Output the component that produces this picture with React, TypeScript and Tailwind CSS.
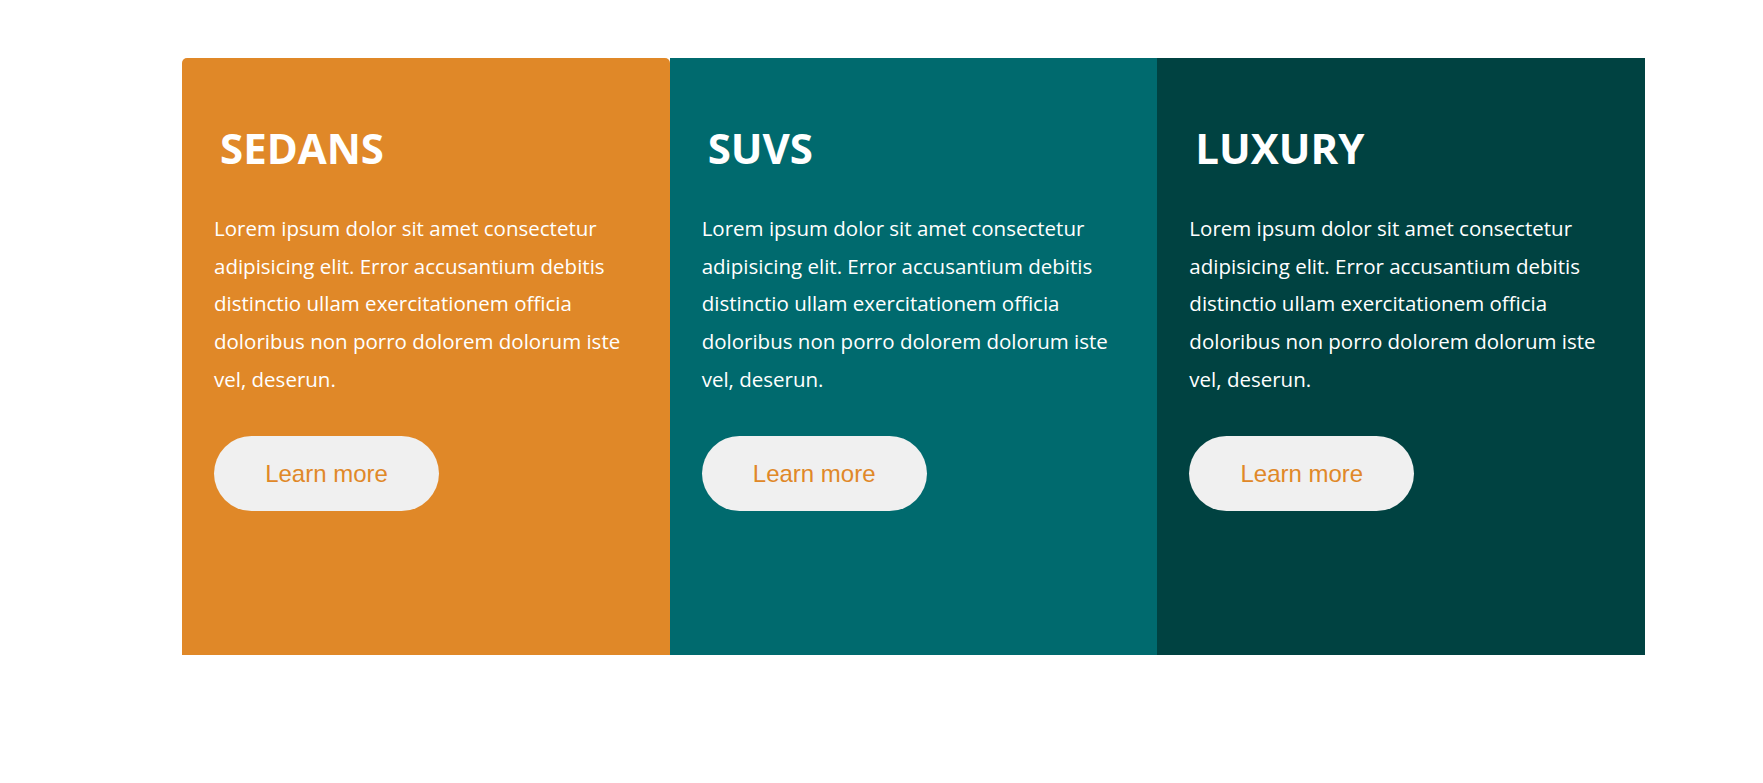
const categories = [
  { title: 'SEDANS', bg: 'bg-[#e08828]', corner: 'rounded-t-[5px]' },
  { title: 'SUVS', bg: 'bg-[#006a6e]', corner: '' },
  { title: 'LUXURY', bg: 'bg-[#004241]', corner: '' },
];

const blurb =
  'Lorem ipsum dolor sit amet consectetur adipisicing elit. Error accusantium debitis distinctio ullam exercitationem officia doloribus non porro dolorem dolorum iste vel, deserun.';

export default function App() {
  return (
    <div className="min-h-[783px] bg-white pt-[58px]">
      <div className="ml-[182px] flex w-[1463px]">
        {categories.map((c) => (
          <div key={c.title} className={`h-[597px] flex-1 px-[32px] pt-[66px] ${c.bg} ${c.corner}`}>
            <h2 className="ml-[6px] text-[42px] leading-[48px] font-bold text-white [font-family:'Open_Sans',sans-serif]">
              {c.title}
            </h2>
            <p className="mt-[38px] text-[20.5px] leading-[37.7px] text-white [font-family:'Open_Sans',sans-serif]">
              {blurb}
            </p>
            <button className="mt-[37.5px] h-[75px] w-[225px] rounded-full bg-[#f0f0f0] text-[24px] text-[#e08828] [font-family:'Liberation_Sans',Arial,sans-serif]">
              Learn more
            </button>
          </div>
        ))}
      </div>
    </div>
  );
}
